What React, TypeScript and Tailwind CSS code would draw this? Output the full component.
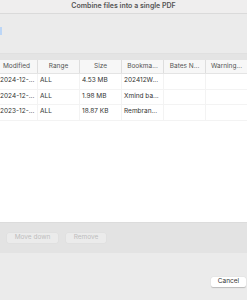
import React from "react";

const cols = ["Modified", "Range", "Size", "Bookma...", "Bates N...", "Warning..."];
const rows = [
  ["2024-12-...", "ALL", "4.53 MB", "202412W...", "", ""],
  ["2024-12-...", "ALL", "1.98 MB", "Xmind ba...", "", ""],
  ["2023-12-...", "ALL", "18.87 KB", "Rembran...", "", ""],
];

export default function App() {
  return (
    <div
      className="w-[247px] h-[300px] bg-[#ececec] flex flex-col overflow-hidden"
      style={{ fontFamily: "Inter, 'Liberation Sans', sans-serif" }}
    >
      <div className="h-[14px] shrink-0 flex items-center justify-center bg-[#efeeee] border-b border-[#dadada] text-[7px] font-semibold text-[#555]">
        Combine files into a single PDF
      </div>
      <div className="h-[39px] shrink-0 bg-[#ebebeb] flex">
        <div className="mt-[13px] w-[2px] h-[8px] bg-[#bcd6f6]" />
      </div>
      <div className="h-[7px] shrink-0 bg-[#e4e4e4] border-t border-[#e0e0e0]" />
      <div className="flex-1 bg-white flex flex-col overflow-hidden">
        <div className="h-[14px] shrink-0 flex bg-[#f7f7f7] border-b border-[#e4e4e4] ml-[-4px]">
          {cols.map((c, i) => (
            <div
              key={i}
              className="w-[42px] shrink-0 flex items-center justify-center text-[6.5px] text-[#555] border-r border-[#dedede]"
            >
              {c}
            </div>
          ))}
        </div>
        {rows.map((r, ri) => (
          <div key={ri} className="h-[15.5px] shrink-0 flex border-b border-[#f3f3f3] ml-[-4px]">
            {r.map((c, i) => (
              <div
                key={i}
                className={`w-[42px] shrink-0 flex items-center text-[6.5px] text-[#333] border-r border-[#f3f3f3] ${i === 0 ? "pl-[4px]" : "pl-[2px]"}`}
              >
                {c}
              </div>
            ))}
          </div>
        ))}
      </div>
      <div className="h-[31px] shrink-0 bg-[#e3e3e3] border-t border-[#dcdcdc] flex items-start pt-[10px] pl-[7px] gap-[8px]">
        <div className="w-[51px] h-[10px] rounded-[2px] bg-[#ebebeb] shadow-[0_0_0_0.5px_#dddddd] flex items-center justify-center text-[6.5px] text-[#bdbdbd]">
          Move down
        </div>
        <div className="w-[40px] h-[10px] rounded-[2px] bg-[#ebebeb] shadow-[0_0_0_0.5px_#dddddd] flex items-center justify-center text-[6.5px] text-[#bdbdbd]">
          Remove
        </div>
      </div>
      <div className="h-[47px] shrink-0 bg-[#ebebeb] flex justify-end items-start pt-[24px] pr-[1px]">
        <div className="w-[35px] h-[10px] rounded-[2px] bg-white shadow-[0_0.5px_1px_rgba(0,0,0,0.2)] flex items-center justify-center text-[6.5px] text-[#333]">
          Cancel
        </div>
      </div>
    </div>
  );
}
